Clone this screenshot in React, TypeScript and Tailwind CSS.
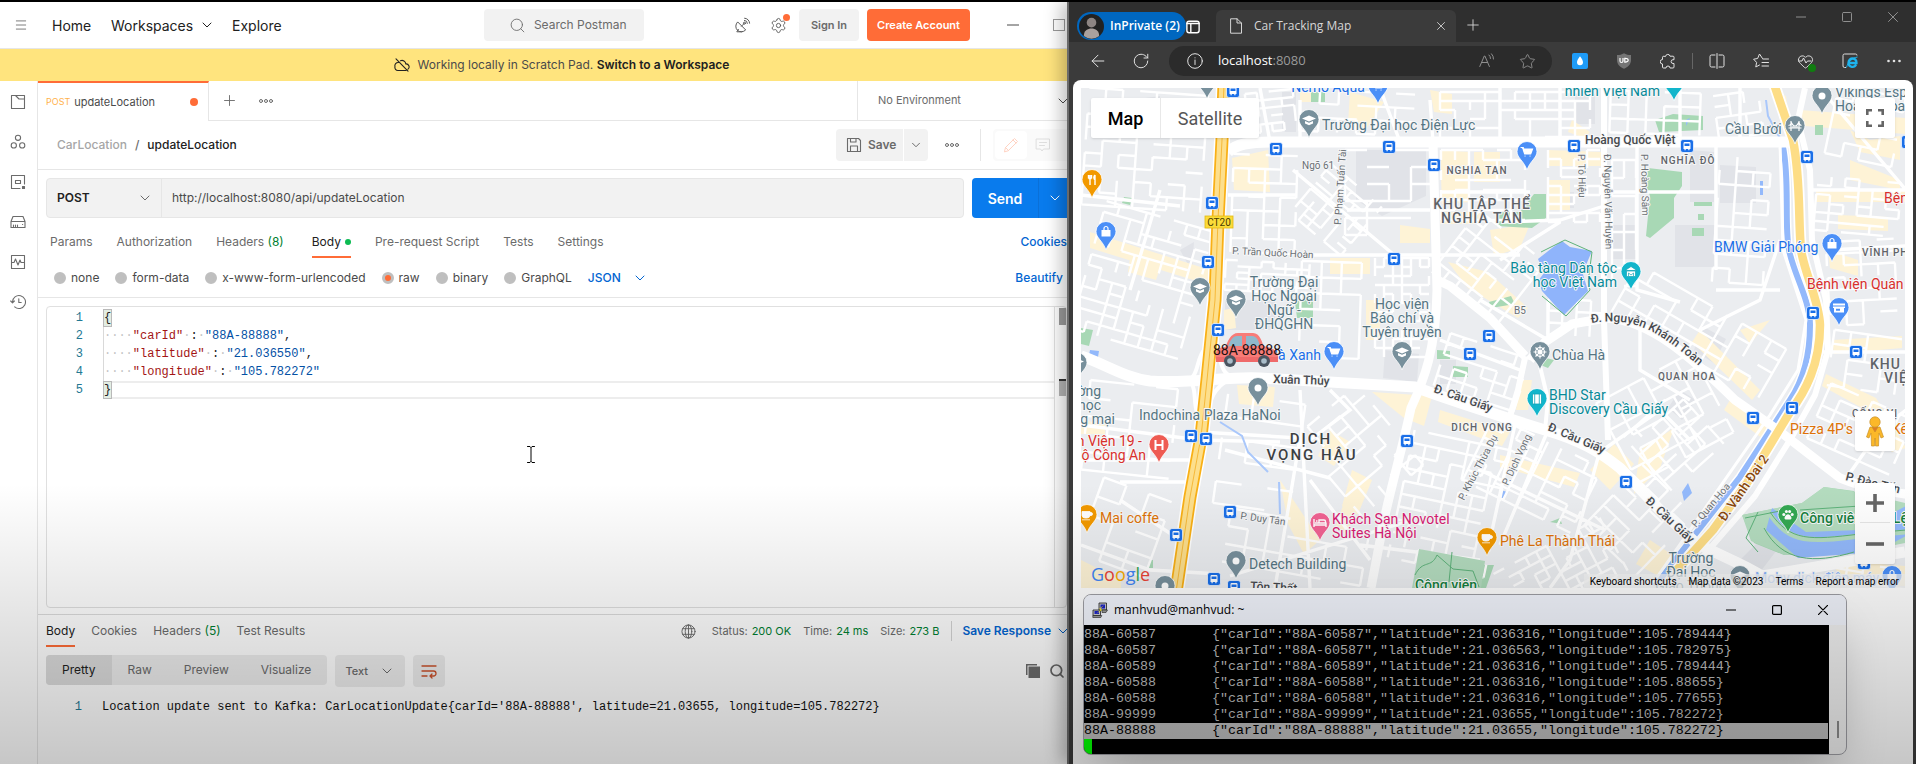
import React from "react";
import { ArrowLeft, ChevronDown, Heart, Menu, Plus, RotateCw, Search, Settings, Star, X } from "lucide-react";

/* ------------------------------------------------------------------ */
/* Small shared pieces                                                 */
/* ------------------------------------------------------------------ */

type SvgProps = { className?: string; children?: React.ReactNode; box?: string; weight?: number };

function Line({ className = "size-4", children, box = "0 0 16 16", weight = 1 }: SvgProps) {
  return (
    <svg
      className={className}
      viewBox={box}
      fill="none"
      stroke="currentColor"
      strokeWidth={weight}
      strokeLinecap="round"
      strokeLinejoin="round"
      aria-hidden="true"
    >
      {children}
    </svg>
  );
}

function Dots({ className = "" }: { className?: string }) {
  return (
    <Line className={`h-1.5 w-4 text-[#6b6b6b] ${className}`} box="0 0 16 6">
      <circle cx="3" cy="3" r="1.5" />
      <circle cx="8" cy="3" r="1.5" />
      <circle cx="13" cy="3" r="1.5" />
    </Line>
  );
}

type PickProps = {
  label: string;
  value: string;
  box: string;
  text: string;
  arrow: string;
};

function Pick({ label, value, box, text, arrow }: PickProps) {
  return (
    <label className={`relative flex items-center ${box}`}>
      <select aria-label={label} className={`w-full appearance-none bg-transparent outline-none ${text}`}>
        <option>{value}</option>
      </select>
      <ChevronDown className={`pointer-events-none absolute size-4 ${arrow}`} strokeWidth={1.5} />
    </label>
  );
}

/* ------------------------------------------------------------------ */
/* API client                                                          */
/* ------------------------------------------------------------------ */

function ClientHeader() {
  return (
    <header className="flex h-[47px] shrink-0 items-center border-b border-[#e6e6e6] pl-3.5 text-[14px] text-[#212121]">
      <button aria-label="Menu" className="text-[#6b6b6b]">
        <Menu className="size-[14px]" strokeWidth={1.5} />
      </button>
      <nav className="flex items-center pl-6">
        <a href="#home" className="w-[59px]">Home</a>
        <button className="flex w-[121px] items-center gap-1.5">
          Workspaces <ChevronDown className="size-4" strokeWidth={1.5} />
        </button>
        <a href="#explore">Explore</a>
      </nav>
      <div className="flex min-w-0 flex-1 justify-end">
        <label className="mr-[90px] flex h-8 w-40 items-center rounded bg-[#f2f2f2] pl-[25px] text-[#6b6b6b]">
          <Search className="size-[17px] shrink-0" strokeWidth={1.25} />
          <input
            aria-label="Search Postman"
            placeholder="Search Postman"
            className="ml-2 w-full min-w-0 bg-transparent text-[12px] outline-none placeholder:text-[#6b6b6b]"
          />
        </label>
      </div>
      <button aria-label="Capture requests" className="mr-[18px] text-[#5a5a5a]">
        <Line className="size-[18px]" box="0 0 18 18">
          <path d="M3.4 6.2a5.6 5.6 0 0 0 8 8zM4.4 13.3l-1.6 2.5h5M7.4 10.3l2.4-2.4" />
          <circle cx="10.4" cy="7.2" r="1" />
          <path d="M10.4 4.4a3 3 0 0 1 3 3M10.6 2.2a5 5 0 0 1 5 5" />
        </Line>
      </button>
      <button aria-label="Settings" className="relative mr-3 text-[#5a5a5a]">
        <Settings className="size-[17px]" strokeWidth={1.3} />
        <span className="absolute -right-[3px] -top-[3px] size-[7px] rounded-full bg-[#ff6c37]" />
      </button>
      <button className="mr-2 h-8 rounded bg-[#f2f2f2] px-3 text-[11px] font-semibold text-[#6b6b6b]">Sign In</button>
      <button className="h-8 rounded bg-[#ff6c37] px-2.5 text-[11px] font-semibold text-white">Create Account</button>
      <button aria-label="Minimize" className="ml-[37px] text-[#4a4a4a]">
        <Line className="size-3" box="0 0 12 12"><path d="M0 6h12" /></Line>
      </button>
      <button aria-label="Maximize" className="ml-[34px] mr-3 size-3 border border-[#9a9a9a]" />
    </header>
  );
}

const railIcons: { name: string; art: React.ReactNode }[] = [
  { name: "Collections", art: <path d="M1.5 1.5h13v13h-13zM5.5 1.5l3.5 3.5h5.5" /> },
  {
    name: "APIs",
    art: (
      <>
        <circle cx="8" cy="3.8" r="2.6" />
        <circle cx="3.8" cy="11.4" r="2.6" />
        <circle cx="12.2" cy="11.4" r="2.6" />
      </>
    ),
  },
  {
    name: "Environments",
    art: (
      <>
        <path d="M14.5 10V1.5h-13v13H10M5.5 6.5h5v3h-5z" />
        <path d="M12.5 12.5h2v2h-2z" fill="currentColor" />
      </>
    ),
  },
  { name: "Mock servers", art: <path d="M1 7.5L3 2.5h10l2 5v6H1zM1 7.5h14M3.5 11v1.5M5.5 11v1.5M7.5 11v1.5M12.5 10.5h.2" /> },
  { name: "Monitors", art: <path d="M1.5 1.5h13v13h-13zM1.5 8.5H4L5.5 5 8 11l2-5 1 2.5h3" /> },
  { name: "History", art: <path d="M2.5 8a6.5 6.5 0 1 1 2.2 4.9M.7 7l1.8 1.8L4.4 7M8.8 4.8v3.7h2.4" /> },
];

function Rail() {
  return (
    <aside className="flex w-[38px] shrink-0 flex-col items-center gap-6 border-r border-[#e6e6e6] pr-px pt-[13px] text-[#6b6b6b]">
      {railIcons.map((icon) => (
        <button key={icon.name} aria-label={icon.name}>
          <Line className="size-4" weight={1.1}>{icon.art}</Line>
        </button>
      ))}
    </aside>
  );
}

function TabBar() {
  return (
    <div className="flex h-10 shrink-0 text-[12px]">
      <div className="flex w-[171px] items-center border-r border-t-2 border-r-[#e6e6e6] border-t-[#ff6c37] pl-2">
        <span className="mr-1 text-[9px] text-[#ffb24d]">POST</span>
        <span className="text-[11px] text-[#4a4a4a]">updateLocation</span>
        <span className="ml-auto mr-2.5 size-2 rounded-full bg-[#ff6c37]" />
      </div>
      <div className="flex flex-1 items-center border-b border-[#e6e6e6] pl-3">
        <button aria-label="New tab" className="text-[#6b6b6b]"><Plus className="size-[17px]" strokeWidth={1.3} /></button>
        <button aria-label="Tab options" className="ml-5"><Dots /></button>
      </div>
      <Pick
        label="Environment"
        value="No Environment"
        box="w-[220px] border-b border-l border-[#e6e6e6] pl-5"
        text="text-[11px] text-[#6b6b6b]"
        arrow="right-1.5 text-[#4a4a4a]"
      />
    </div>
  );
}

function RequestTitle() {
  return (
    <div className="flex h-[49px] shrink-0 items-center border-b border-[#e6e6e6] pl-[19px] text-[12px] font-medium">
      <a href="#collection" className="text-[#a6a6a6]">CarLocation</a>
      <span className="px-2 text-[#6b6b6b]">/</span>
      <h1 className="flex-1 text-[#212121]">updateLocation</h1>
      <button className="flex h-8 w-[67px] items-center gap-1.5 rounded-l bg-[#f2f2f2] pl-2.5 font-semibold text-[#6b6b6b]">
        <Line className="size-4" weight={1.1}>
          <path d="M1.5 1.5h11l2 2v11h-13zM4.5 1.5V5H10V1.5M4.5 14.5V9h7v5.5" />
        </Line>
        Save
      </button>
      <button aria-label="Save options" className="ml-px grid h-8 w-6 place-items-center rounded-r bg-[#f2f2f2] text-[#6b6b6b]">
        <ChevronDown className="size-3.5" strokeWidth={1.7} />
      </button>
      <button aria-label="More actions" className="ml-4"><Dots /></button>
      <div className="ml-5 flex h-8 border-l border-[#e6e6e6] pl-3">
        <div className="flex w-[84px] items-center rounded bg-[#fafafa] p-0.5">
          <button aria-label="Edit" className="grid h-7 w-8 place-items-center rounded bg-white text-[#ffd3c3]">
            <Line className="size-4"><path d="M1.5 14.5l1-4 9-9 3 3-9 9zM10 3l3 3M2.5 10.5l3 3" /></Line>
          </button>
          <button aria-label="Comments" className="grid h-7 w-8 place-items-center text-[#dedede]">
            <Line className="size-4"><path d="M1.5 2h13v10h-6L7 14l-1.5-2h-4zM4.500 5.500h7M4.500 8.500h5" /></Line>
          </button>
        </div>
      </div>
    </div>
  );
}

function UrlRow() {
  return (
    <div className="flex shrink-0 gap-2 pl-2 pt-2 text-[12px]">
      <div className="flex h-10 min-w-0 flex-1 rounded border border-[#e6e6e6] bg-[#f2f2f2]">
        <Pick
          label="Method"
          value="POST"
          box="w-[115px] border-r border-[#e6e6e6] pl-2.5"
          text="font-semibold text-[#212121]"
          arrow="right-2 text-[#6b6b6b]"
        />
        <input
          aria-label="Request URL"
          defaultValue="http://localhost:8080/api/updateLocation"
          className="min-w-0 flex-1 bg-transparent pl-2.5 text-[#4a4a4a] outline-none"
        />
      </div>
      <div className="flex h-10 w-[105px] overflow-hidden rounded-l bg-[#097bed] text-white">
        <button className="w-[67px] border-r border-[#0a70d8] text-[14px] font-semibold">Send</button>
        <button aria-label="Send options" className="pl-2"><ChevronDown className="size-4" strokeWidth={1.5} /></button>
      </div>
    </div>
  );
}

function RequestTabs() {
  return (
    <nav className="mt-2 flex h-8 shrink-0 items-stretch gap-6 pl-3 text-[12px] text-[#6b6b6b]">
      <button>Params</button>
      <button>Authorization</button>
      <button className="pr-1">Headers <span className="text-[#007f31]">(8)</span></button>
      <button className="flex items-center gap-1 border-b-2 border-[#ff6c37] pt-0.5 text-[#212121]">
        Body <span className="size-1.5 rounded-full bg-[#0cbb52]" />
      </button>
      <button>Pre-request Script</button>
      <button>Tests</button>
      <button>Settings</button>
      <button className="ml-auto mr-2.5 font-medium text-[#0265d2]">Cookies</button>
    </nav>
  );
}

const bodyKinds = ["none", "form-data", "x-www-form-urlencoded", "raw", "binary", "GraphQL"];

function BodyKinds() {
  return (
    <div className="flex h-10 shrink-0 items-center gap-4 border-b border-[#e6e6e6] pl-4 text-[12px] text-[#4a4a4a]">
      {bodyKinds.map((kind) => (
        <label key={kind} className="flex items-center gap-[5px]">
          <input
            type="radio"
            name="body-kind"
            defaultChecked={kind === "raw"}
            className="size-3 appearance-none rounded-full border-[3px] border-[#bfbfbf] bg-[#bfbfbf] checked:bg-[#ff6c37]"
          />
          {kind}
        </label>
      ))}
      <Pick
        label="Raw format"
        value="JSON"
        box="w-[60px]"
        text="font-medium text-[#0265d2]"
        arrow="right-0 text-[#0265d2]"
      />
      <button className="ml-auto mr-3.5 font-medium text-[#0265d2]">Beautify</button>
    </div>
  );
}

const payload: { key: string; value: string; end: string }[] = [
  { key: '"carId"', value: '"88A-88888"', end: "," },
  { key: '"latitude"', value: '"21.036550"', end: "," },
  { key: '"longitude"', value: '"105.782272"', end: "" },
];

function Brace({ children }: { children: string }) {
  return <span className="h-[18px] border border-[#b9b9b9] bg-[#e3ede3] leading-4">{children}</span>;
}

function Editor() {
  return (
    <div className="relative mb-1.5 ml-2 mr-2.5 mt-2 flex min-h-0 flex-1 rounded-sm border border-[#e0e0e0] font-['Liberation_Mono',monospace] text-[12px] leading-[18px]">
      <ol className="w-9 pt-0.5 text-right text-[#237893]">
        {[1, 2, 3, 4, 5].map((n) => <li key={n}>{n}</li>)}
      </ol>
      <div className="ml-5 flex-1 whitespace-pre pt-0.5 text-[#212121]">
        <div className="flex h-[18px]"><Brace>{"{"}</Brace></div>
        {payload.map((row) => (
          <div key={row.key} className="border-l border-[#d9d9d9]">
            <span className="text-[#c4c4c4]">····</span>
            <span className="text-[#a31515]">{row.key}</span>
            <span className="text-[#c4c4c4]">·</span>:<span className="text-[#c4c4c4]">·</span>
            <span className="text-[#0451a5]">{row.value}</span>
            {row.end}
          </div>
        ))}
        <div className="flex h-[18px] border-y-2 border-[#ededed]">
          <span className="-mt-0.5 flex"><Brace>{"}"}</Brace></span>
        </div>
      </div>
      <div className="w-3 border-l border-[#e0e0e0] pl-1 pt-px">
        <div className="h-[17px] bg-[#9b9b9b]" />
        <div className="mt-[54px] h-[17px] border-t-2 border-[#333333] bg-[#b5b5b5]" />
      </div>
      <Line className="absolute left-[480px] top-[139px] h-[17px] w-2 text-black" box="0 0 8 17">
        <path d="M.5.5H3l1 1 1-1h2.500M4 1.500v14M.5 16.500H3l1-1 1 1h2.500" />
      </Line>
    </div>
  );
}

const stats = [
  { name: "Status:", value: "200 OK" },
  { name: "Time:", value: "24 ms" },
  { name: "Size:", value: "273 B" },
];

function Response() {
  return (
    <section className="h-[150px] shrink-0 border-t border-[#dcdcdc] pl-2 text-[12px]">
      <div className="flex h-8 items-stretch">
        <nav className="flex gap-4 text-[#6b6b6b]">
          <button className="border-b-2 border-[#ff6c37] pt-0.5 text-[#212121]">Body</button>
          <button>Cookies</button>
          <button>Headers <span className="text-[#007f31]">(5)</span></button>
          <button>Test Results</button>
        </nav>
        <dl className="ml-auto flex items-center gap-3 text-[11px] text-[#6b6b6b]">
          <Line className="mr-1 size-[15px]">
            <circle cx="8" cy="8" r="7" />
            <ellipse cx="8" cy="8" rx="3.5" ry="7" />
            <path d="M1.800 5h12.400M1.800 11h12.400M8 1v14" />
          </Line>
          {stats.map((s) => (
            <div key={s.name} className="flex gap-1">
              <dt>{s.name}</dt>
              <dd className="text-[#007f31]">{s.value}</dd>
            </div>
          ))}
        </dl>
        <button className="my-1.5 ml-3 mr-1.5 flex items-center gap-1 border-l border-[#d4d4d4] pl-2.5 font-semibold text-[#0265d2]">
          Save Response <ChevronDown className="size-4" strokeWidth={1.5} />
        </button>
      </div>
      <div className="mt-2 flex items-start gap-2">
        <div className="flex h-[30px] overflow-hidden rounded bg-[#ededed] text-[#6b6b6b]">
          <button className="bg-[#dcdcdc] px-4 text-[#212121]">Pretty</button>
          <button className="px-4">Raw</button>
          <button className="px-4">Preview</button>
          <button className="px-4">Visualize</button>
        </div>
        <Pick
          label="Response format"
          value="Text"
          box="h-8 w-[70px] rounded bg-[#ededed] pl-2.5"
          text="text-[11px] font-medium text-[#6b6b6b]"
          arrow="right-2.5 text-[#6b6b6b]"
        />
        <button aria-label="Wrap lines" className="grid h-8 w-8 place-items-center rounded bg-[#ededed] text-[#c9502a]">
          <Line className="size-4" weight={1.3}>
            <path d="M1 3h14M1 8h11.500a2.500 2.500 0 0 1 0 5H9.500M11 11l-2 2 2 2M1 13h5" />
          </Line>
        </button>
        <div className="ml-auto mr-3 flex gap-2 pt-2 text-[#6b6b6b]">
          <button aria-label="Copy">
            <svg viewBox="0 0 16 16" className="size-4" fill="currentColor" aria-hidden="true">
              <path d="M1 1h11v1.500H2.500V12H1z" /><path d="M3.500 3.500H15V15H3.500z" />
            </svg>
          </button>
          <button aria-label="Search response"><Search className="size-4" strokeWidth={2.6} /></button>
        </div>
      </div>
      <div className="mt-[11px] flex font-['Liberation_Mono',monospace] leading-[18px]">
        <span className="w-9 text-right text-[#237893]">1</span>
        <output className="ml-5 whitespace-pre text-[#111111]">
          {"Location update sent to Kafka: CarLocationUpdate{carId='88A-88888', latitude=21.03655, longitude=105.782272}"}
        </output>
      </div>
    </section>
  );
}

function Client() {
  return (
    <div className="min-w-0 overflow-hidden bg-white font-['Inter',sans-serif]">
      <div className="flex h-full w-[calc(100%+10px)] flex-col">
        <ClientHeader />
        <div className="flex h-8 shrink-0 items-center justify-center gap-2 bg-[#ffe47e] pl-[46px] text-[12px] text-[#4a4a4a]">
          <Line className="h-3.5 w-4 text-[#212121]" box="0 0 16 14" weight={1.1}>
            <path d="M4.500 4.500A3.300 3.300 0 0 0 1 8.700a3 3 0 0 0 3 3.800h8M6.500 2.700a3.800 3.800 0 0 1 5.300 3.200 3 3 0 0 1 2.200 5.300M2 .8l12 12.400" />
          </Line>
          <span>Working locally in Scratch Pad. <a href="#switch" className="font-semibold text-[#212121]">Switch to a Workspace</a></span>
        </div>
        <div className="flex min-h-0 flex-1">
          <Rail />
          <main className="flex min-w-0 flex-1 flex-col">
            <TabBar />
            <RequestTitle />
            <UrlRow />
            <RequestTabs />
            <BodyKinds />
            <Editor />
            <Response />
          </main>
        </div>
      </div>
    </div>
  );
}

/* ------------------------------------------------------------------ */
/* Street map                                                          */
/* ------------------------------------------------------------------ */

type Patch = [x: number, y: number, w: number, h: number, turn: number, dx: number, dy: number];

const patches: Patch[] = [
  [1085, 92, 130, 120, 4, 17, 13],
  [1085, 215, 120, 140, 16, 14, 11],
  [1235, 92, 60, 44, -6, 12, 8],
  [1300, 92, 130, 44, 3, 19, 14],
  [1232, 155, 64, 100, 2, 16, 14],
  [1300, 180, 75, 70, 40, 11, 8],
  [1345, 150, 88, 100, 0, 22, 17],
  [1375, 258, 60, 100, 0, 9, 9],
  [1225, 262, 85, 30, 3, 12, 6],
  [1300, 262, 70, 110, 2, 20, 16],
  [1440, 92, 160, 46, 0, 15, 9],
  [1441, 150, 95, 76, 0, 14, 10],
  [1445, 230, 90, 80, 38, 14, 11],
  [1548, 150, 54, 76, 0, 13, 9],
  [1548, 300, 56, 46, 3, 14, 12],
  [1610, 92, 96, 46, 2, 18, 14],
  [1612, 160, 30, 140, 0, 12, 18],
  [1716, 92, 56, 46, -8, 15, 11],
  [1716, 158, 66, 130, 4, 17, 14],
  [1830, 92, 80, 80, 12, 17, 14],
  [1815, 180, 95, 60, 5, 14, 9],
  [1828, 240, 80, 90, -3, 17, 12],
  [1612, 305, 180, 60, 30, 17, 14],
  [1610, 370, 120, 90, -28, 18, 15],
  [1830, 335, 80, 60, 8, 17, 14],
  [1815, 400, 95, 60, 24, 15, 12],
  [1085, 385, 100, 100, 6, 22, 18],
  [1085, 490, 90, 95, 20, 24, 20],
  [1220, 400, 95, 110, 8, 26, 22],
  [1225, 520, 140, 62, 10, 20, 18],
  [1320, 395, 90, 110, -40, 16, 13],
  [1400, 440, 110, 130, 12, 14, 13],
  [1440, 345, 85, 55, 18, 14, 11],
  [1470, 440, 130, 80, 26, 15, 12],
  [1500, 540, 130, 60, -28, 12, 10],
  [1600, 480, 80, 90, 44, 18, 14],
  [1640, 400, 80, 80, -42, 14, 12],
  [1830, 565, 80, 24, 10, 16, 9],
];

/* Broken grid lines give each quarter its own irregular block layout. */
function streetPath([, , w, h, , dx, dy]: Patch, index: number): string {
  let seed = index * 7919 + 17;
  const next = () => {
    seed = (seed * 16807) % 2147483647;
    return seed / 2147483647;
  };
  const parts: string[] = [];
  for (let x = 0; x <= w; x += dx) {
    for (let y = 0; y + dy <= h; y += dy) {
      if (next() > 0.4) parts.push(`M${x} ${y}v${dy}`);
    }
  }
  for (let y = 0; y <= h; y += dy) {
    for (let x = 0; x + dx <= w; x += dx) {
      if (next() > 0.35) parts.push(`M${x} ${y}h${dx}`);
    }
  }
  return parts.join("");
}

const cream =
  "M1232 158l36-8 2 42-36-2zM1224 310l10-2 2 20-12 2zM1237 385l38 2-2 20-34-3zM1090 232l120 38-4 14-116-36zM1081 420l24 4v10h-24zM1130 258l30 10-4 12-28-8z" +
  "M1300 92l20 0 0 10-20 0zM1350 92l34 10-20 30-16-8zM1430 90l22 4 0 20-18-2zM1440 150l30 2v50l-28 2zM1474 152l26 0v30h-26zM1548 150l54 2v14h-54zM1548 180l22 0v30h-22zM1572 120l18 12-6 6-16-6z" +
  "M1330 258l40 0v16h-40zM1366 300l14 0v40h-14zM1448 262l40 10 40 36-10 10-50-30zM1400 225l30 4v14h-30zM1440 212l40 0v12h-40zM1490 230l40-6-10 24-26 8z" +
  "M1372 392l60 4-8 30-20-8zM1330 430l20 12-16 24-16-10zM1280 480l20 30 20 30-16 14-16-30zM1352 470l20 10-14 34-16-8zM1345 500l16 4-16 30-10-6zM1440 410l70 22-8 14-64-24z" +
  "M1520 380l12 0-4 30-12 0zM1590 470l24-26 20 20-24 26zM1640 450l34-22-14 40-26 26zM1500 455l80 18-6 14-74-20zM1700 330l60 60-8 10-60-58zM1740 330l30-10-20 24zM1730 400l40 30-8 8-38-28z" +
  "M1776 92l10 4 4 30-6-2zM1800 110l105 8v16l-100-8zM1850 130l20 10 30-4v24l-40-8zM1816 190l90 0v12h-90zM1838 215l50 2v14l-50-2zM1850 160l50 20v10l-50-10zM1828 250l30 10v16l-28-8z" +
  "M1832 340l70-4v12l-68 6zM1826 374l50 24 30 50-14 4-30-44-40-22zM1830 560l75 6v20l-60-2zM1650 540l30 20-14 20-30-16zM1081 560l40 20v8h-40z";

const campus =
  "M1356 150l70 0v46l-44 20-26-16zM1282 92l14 0v40h-14zM1550 192l24 0v16h-24zM1611 225l26 0v34h-26zM1675 225l40 0v42h-40zM1690 150l24 2v50h-24zM1720 165l36 2v36h-36z" +
  "M1130 100l30-4v22h-30zM1180 250l14-8-2 30zM1225 300l50 0v30h-50zM1385 350l34 4-2 28-34-4zM1700 325l26 14-12 24-20-12zM1680 390l16 10-14 20-14-12zM1730 570l34-34 16 10-26 34zM1440 360l16 0v24h-16zM1575 94l20 0v30h-20z";

const parks =
  "M1311 92h14v10h-14zM1124 197l8 1-2 7-8-2zM1081 328l12 2-4 16-8-2zM1295 302l18-6v22h-16zM1437 350l13 1v8h-13zM1453 366l15 1v10h-15zM1534 194h12v24l-14 10-36-2 4-14h20z" +
  "M1648 168l34 4v14l-8 12v20l-24 20-4-2 4-40-4-10zM1655 120l18-6 30 2v14l-44 2zM1692 228h12v8h-12zM1698 214h6v6h-6zM1694 202h18v4h-18zM1815 125h8v10h-8zM1489 302l22-6 4 8-24 4zM1538 356l16 4-6 8-10-4z" +
  "M1149 560h4v8h-4zM1480 565l14 0-8 23h-6zM1742 515l60-12 22-16 30 4v20l-10 30-60 14-30-12zM1550 522l10-4 2 6z";

const water =
  "M1682 492l6-9 4 10-8 8zM1501 490l6 2-4 7-4-3zM1090 350l9 1-1 6-9-2zM1760 181h3v14h-3zM1686 120l4-2-4 8z";

const arterials: [string, number][] = [
  ["M1081 356C1105 364 1125 378 1150 381C1190 384 1230 376 1260 378L1415 387C1450 400 1500 416 1545 430C1580 440 1600 452 1620 468L1660 510L1695 542C1720 556 1740 562 1762 576L1905 552", 11],
  ["M1228 152C1236 144 1250 142 1270 142L1790 142", 11],
  ["M1433 142L1437 290C1436 350 1424 380 1411 408C1402 450 1390 490 1383 525L1371 588", 9],
  ["M1437 280L1450 286L1490 318L1525 356", 9],
  ["M1530 360L1545 342L1572 324L1606 318C1650 320 1690 356 1735 400L1778 430L1840 478C1870 490 1890 492 1906 494", 9],
  ["M1604 88L1604 320L1608 440", 6],
  ["M1805 88L1798 120L1810 170L1812 240L1826 300L1828 350L1815 395L1790 440L1755 496L1700 560", 6],
  ["M1780 142L1783 250L1806 320L1798 370L1770 415L1690 530L1655 580", 3],
  ["M1525 358L1518 390L1510 416", 6],
  ["M1539 362L1548 400L1545 430", 4],
];

const lanes =
  "M1293 170L1393 254M1347 210H1430M1310 255H1520M1228 195H1296M1081 195L1180 206M1160 190L1130 290M1081 425L1200 440L1280 442M1081 460H1190M1200 432L1300 438L1275 588M1225 450L1330 478M1120 482H1190M1120 500L1180 540" +
  "M1081 545L1150 570L1220 574M1230 576L1412 520M1300 390L1310 588M1360 545L1480 560M1310 440L1350 410L1330 390M1310 480L1370 560M1440 340L1520 370M1516 420L1490 540M1480 470L1605 530M1548 430L1500 545M1600 452L1660 410L1690 440" +
  "M1502 222L1560 220L1604 206M1560 222L1500 260M1610 192H1716M1637 142V290L1680 302M1716 142V270M1700 330L1760 300L1780 240M1716 290H1780M1640 318V370L1690 400M1820 352H1906M1830 250L1906 246M1810 190H1906M1830 100L1906 190" +
  "M1845 480L1880 430L1906 410M1548 300V340M1480 300L1548 340M1441 192H1530M1500 88V142M1560 88V142M1680 88V142M1740 88V142M1380 88L1400 142M1430 100L1433 142M1300 100V142M1260 88L1270 142M1600 450L1570 560L1550 588";

const ring = "M1774 84L1793 140C1801 180 1798 220 1801 250C1805 275 1819 300 1820 325C1820 365 1805 392 1790 412L1747 483L1713 530L1675 572";
const river = "M1783 147C1790 180 1784 225 1789 250C1794 275 1810 300 1810 325C1810 360 1800 385 1790 400L1740 477L1693 537L1655 586";
const highway = "M1224 84L1222 140L1218 220L1215 300L1207 380L1201 437L1190 497L1176 592";

const stops: [number, number][] = [
  [1233, 91], [1276, 149], [1389, 147], [1434, 165], [1212, 203], [1208, 262], [1394, 259], [1574, 146], [1687, 146],
  [1807, 157], [1908, 142], [1218, 330], [1470, 354], [1489, 336], [1191, 436], [1206, 439], [1407, 441], [1230, 512],
  [1176, 535], [1214, 579], [1234, 587], [1813, 313], [1856, 352], [1792, 408], [1753, 418], [1626, 482], [1864, 563],
];

const glyphs: Record<string, React.ReactNode> = {
  dot: <circle r="3.5" fill="#fff" />,
  school: <path d="M0-4.500l7 3-7 3-7-3zM-4 1l4 1.700L4 1v2.500L0 5.200-4 3.500z" fill="#fff" />,
  cart: <path d="M-6-4.500h2.200l.6 1.500H5.500L3.700 2h-6l-1.500-4.500M-2 4h.1M3 4h.1" fill="#fff" stroke="#fff" strokeWidth="1.2" strokeLinecap="round" />,
  bag: (
    <>
      <path d="M-4.500-2h9v6.500h-9z" fill="#fff" />
      <path d="M-2-2v-1.500a2 2 0 0 1 4 0V-2" fill="none" stroke="#fff" strokeWidth="1.2" />
    </>
  ),
  food: <path d="M-3.500-5v3.500M-2-5v10M-.5-5v3.500M-3.500-1.500h3M3-5v10M3-5c-1.500 1-1.500 4 0 5" fill="none" stroke="#fff" strokeWidth="1.4" />,
  cup: <path d="M-5-3.500H3v4A3 3 0 0 1 0 3h-2a3 3 0 0 1-3-2.500zM3-2.500h1a1.500 1.500 0 0 1 0 3H3M-5 4.800h8" fill="#fff" stroke="#fff" strokeWidth=".8" />,
  wheel: (
    <g fill="none" stroke="#fff" strokeWidth="1.1">
      <circle r="4.5" /><circle r="1.5" />
      <path d="M0-6.500v13M-6.500 0h13M-4.500-4.500l9 9M4.500-4.500l-9 9" />
    </g>
  ),
  film: <path d="M-4.500-5h9v10h-9zM-2.300-5v10M2.300-5v10" fill="#fff" stroke="#12a5b8" strokeWidth=".8" />,
  museum: <path d="M-6-1.500L0-5.500l6 4zM-4.500-1h9v5.500h-9zM-2.500 4V1L0 3l2.500-2v3" fill="#fff" stroke="#12a5b8" strokeWidth=".7" />,
  bridge: <path d="M-4-5v10M4-5v10M-6.500 2h13M-6.500-.5C-3-1-4-4-4-4S-2 0 0 0s4-4 4-4 0 3 2.500 3.500M-2 0v2M0 0v2M2 0v2" fill="none" stroke="#fff" strokeWidth="1.2" />,
  shop: <path d="M-6-4.500h12v2h-12zM-6-1.500h12V0h-1v4.500H-5V0h-1zM-3 .8v2h4v-2z" fill="#fff" fillRule="evenodd" />,
  hospital: <path d="M-3.500-5v10M3.500-5v10M-3.500 0h7" fill="none" stroke="#fff" strokeWidth="2" />,
  bed: <path d="M-6-4v8M-6 2H6M6 4V-.5M-5 0h10M-1-3h5a1.500 1.500 0 0 1 1.500 1.500V0H-1zM-4-2h1.500" fill="none" stroke="#fff" strokeWidth="1.4" />,
  paw: (
    <g fill="#fff">
      <circle cx="-4.2" cy="-.5" r="1.5" /><circle cx="-1.6" cy="-3.5" r="1.5" />
      <circle cx="1.6" cy="-3.5" r="1.5" /><circle cx="4.2" cy="-.5" r="1.5" />
      <path d="M0-.8c2 0 3.500 2.500 3.500 3.800 0 2-2 1.500-3.500 1.500S-3.500 5-3.500 3C-3.500 1.700-2-.8 0-.8z" />
    </g>
  ),
};

const slate = "#78909c";
const blue = "#4b8ff7";
const pins: [number, number, string, string][] = [
  [1207, 81, slate, "dot"], [1378, 86, blue, "cart"], [1309, 120, slate, "school"], [1092, 180, "#f29900", "food"],
  [1106, 232, blue, "bag"], [1200, 288, slate, "school"], [1236, 300, slate, "school"], [1258, 388, slate, "dot"],
  [1334, 352, blue, "cart"], [1402, 352, slate, "school"], [1540, 352, slate, "wheel"], [1537, 399, "#12b5cb", "film"],
  [1631, 272, "#12b5cb", "museum"], [1527, 152, blue, "cart"], [1674, 83, "#12b5cb", "dot"], [1822, 96, slate, "dot"],
  [1795, 126, slate, "bridge"], [1832, 244, blue, "bag"], [1839, 308, blue, "shop"], [1159, 445, "#ee5b52", "hospital"],
  [1087, 515, "#f29900", "cup"], [1320, 523, "#f06292", "bed"], [1236, 561, slate, "dot"], [1165, 586, slate, "dot"],
  [1487, 538, "#f29900", "cup"], [1788, 515, "#34a853", "paw"], [1740, 576, slate, "school"], [1892, 576, blue, "bag"],
  [1077, 363, slate, "school"],
];

type Label = {
  x: number;
  y: number;
  lines: string[];
  tone: keyof typeof tones;
  anchor?: "start" | "middle" | "end";
  turn?: number;
};

const tones = {
  place: "fill-[#557583] text-[14px]",
  shop: "fill-[#1a6fe8] text-[14px]",
  teal: "fill-[#078a98] text-[14px]",
  food: "fill-[#dd7208] text-[14px]",
  hotel: "fill-[#d81b72] text-[14px]",
  health: "fill-[#d9302c] text-[14px]",
  park: "fill-[#15803d] text-[14px] font-medium",
  lane: "fill-[#6b7075] text-[10px]",
  road: "fill-[#46494d] text-[12px] font-medium",
  ring: "fill-[#8a4708] text-[13px] font-medium",
  ward: "fill-[#5f6368] text-[10px] font-medium tracking-[1px]",
  area: "fill-[#5f6368] text-[14px] font-medium tracking-[1px]",
  district: "fill-[#3c4043] text-[15px] font-medium tracking-[2px]",
};

const labels: Label[] = [
  { x: 1328, y: 92, lines: ["Nemo Aqua"], tone: "shop", anchor: "middle" },
  { x: 1322, y: 130, lines: ["Trường Đại học Điện Lực"], tone: "place" },
  { x: 1302, y: 169, lines: ["Ngõ 61"], tone: "lane" },
  { x: 1341, y: 225, lines: ["P. Phạm Tuấn Tài"], tone: "lane", turn: -86 },
  { x: 1477, y: 174, lines: ["NGHIA TAN"], tone: "ward", anchor: "middle" },
  { x: 1482, y: 209, lines: ["KHU TẬP THỂ", "NGHĨA TÂN"], tone: "area", anchor: "middle" },
  { x: 1232, y: 254, lines: ["P. Trần Quốc Hoàn"], tone: "lane", turn: 3 },
  { x: 1284, y: 287, lines: ["Trường Đại", "Học Ngoại", "Ngữ -", "ĐHQGHN"], tone: "place", anchor: "middle" },
  { x: 1321, y: 360, lines: ["Ga Hà Xanh"], tone: "shop", anchor: "end" },
  { x: 1402, y: 309, lines: ["Học viện", "Báo chí và", "Tuyên truyền"], tone: "place", anchor: "middle" },
  { x: 1273, y: 383, lines: ["Xuân Thủy"], tone: "road", turn: 2 },
  { x: 1139, y: 420, lines: ["Indochina Plaza HaNoi"], tone: "place" },
  { x: 1101, y: 396, lines: ["Trường", "Đại học"], tone: "place", anchor: "end" },
  { x: 1115, y: 424, lines: ["Thương mại"], tone: "place", anchor: "end" },
  { x: 1142, y: 446, lines: ["Bệnh Viện 19 -"], tone: "health", anchor: "end" },
  { x: 1146, y: 460, lines: ["Bộ Công An"], tone: "health", anchor: "end" },
  { x: 1311, y: 444, lines: ["DỊCH"], tone: "district", anchor: "middle" },
  { x: 1312, y: 460, lines: ["VỌNG HẬU"], tone: "district", anchor: "middle" },
  { x: 1433, y: 392, lines: ["Đ. Cầu Giấy"], tone: "road", turn: 19 },
  { x: 1482, y: 431, lines: ["DICH VONG"], tone: "ward", anchor: "middle" },
  { x: 1464, y: 501, lines: ["P. Khúc Thừa Dụ"], tone: "lane", turn: -62 },
  { x: 1508, y: 486, lines: ["P. Dịch Vọng"], tone: "lane", turn: -65 },
  { x: 1100, y: 523, lines: ["Mai coffe"], tone: "food" },
  { x: 1240, y: 519, lines: ["P. Duy Tân"], tone: "lane", turn: 8 },
  { x: 1332, y: 524, lines: ["Khách Sạn Novotel", "Suites Hà Nội"], tone: "hotel" },
  { x: 1249, y: 569, lines: ["Detech Building"], tone: "place" },
  { x: 1250, y: 590, lines: ["Tôn Thất"], tone: "road", turn: 3 },
  { x: 1446, y: 590, lines: ["Công viên"], tone: "park", anchor: "middle" },
  { x: 1500, y: 546, lines: ["Phê La Thành Thái"], tone: "food" },
  { x: 1660, y: 96, lines: ["nhiên Việt Nam"], tone: "teal", anchor: "end" },
  { x: 1725, y: 134, lines: ["Cầu Bưởi"], tone: "place" },
  { x: 1585, y: 144, lines: ["Hoàng Quốc Việt"], tone: "road" },
  { x: 1688, y: 164, lines: ["NGHĨA ĐÔ"], tone: "ward", anchor: "middle" },
  { x: 1578, y: 154, lines: ["P. Tô Hiệu"], tone: "lane", turn: 89 },
  { x: 1604, y: 154, lines: ["Đ. Nguyễn Văn Huyên"], tone: "lane", turn: 89 },
  { x: 1641, y: 154, lines: ["P. Hoàng Sâm"], tone: "lane", turn: 89 },
  { x: 1835, y: 97, lines: ["Vikings Esports", "Hoàng Hoa Thám"], tone: "place" },
  { x: 1714, y: 252, lines: ["BMW Giải Phóng"], tone: "shop" },
  { x: 1862, y: 256, lines: ["VĨNH PHÚC"], tone: "ward" },
  { x: 1884, y: 203, lines: ["Bệnh viện"], tone: "health" },
  { x: 1807, y: 289, lines: ["Bệnh viện Quân"], tone: "health" },
  { x: 1617, y: 273, lines: ["Bảo tàng Dân tộc", "học Việt Nam"], tone: "teal", anchor: "end" },
  { x: 1514, y: 314, lines: ["B5"], tone: "lane" },
  { x: 1552, y: 360, lines: ["Chùa Hà"], tone: "place" },
  { x: 1549, y: 400, lines: ["BHD Star", "Discovery Cầu Giấy"], tone: "teal" },
  { x: 1687, y: 380, lines: ["QUAN HOA"], tone: "ward", anchor: "middle" },
  { x: 1547, y: 430, lines: ["Đ. Cầu Giấy"], tone: "road", turn: 23 },
  { x: 1645, y: 502, lines: ["Đ. Cầu Giấy"], tone: "road", turn: 43 },
  { x: 1696, y: 528, lines: ["P. Quan Hoa"], tone: "lane", turn: -50 },
  { x: 1725, y: 522, lines: ["Đ. Vành Đai 2"], tone: "ring", turn: -55 },
  { x: 1790, y: 434, lines: ["Pizza 4P's Phan Kế"], tone: "food" },
  { x: 1870, y: 369, lines: ["KHU"], tone: "area" },
  { x: 1884, y: 383, lines: ["VIỆN"], tone: "area" },
  { x: 1852, y: 417, lines: ["CỐNG VỊ"], tone: "ward" },
  { x: 1845, y: 480, lines: ["P. Đào Tấn"], tone: "road", turn: 14 },
  { x: 1800, y: 523, lines: ["Công viên Thủ Lệ"], tone: "park" },
  { x: 1691, y: 563, lines: ["Trường", "Đại Học", "Giao Thông"], tone: "place", anchor: "middle" },
];

function MapPin({ at }: { at: [number, number, string, string] }) {
  const [x, y, color, glyph] = at;
  return (
    <g transform={`translate(${x} ${y})`}>
      <path d="M0-10.500A10 10 0 0 1 10-.500C10 6 3 9 0 18C-3 9-10 6-10-.500A10 10 0 0 1 0-10.500z" fill={color} stroke="#fff" strokeWidth=".8" />
      {glyphs[glyph]}
    </g>
  );
}

function BusStop({ at }: { at: [number, number] }) {
  return (
    <g transform={`translate(${at[0]} ${at[1]})`}>
      <rect x="-6.5" y="-6.5" width="13" height="13" rx="2.5" fill="#1a6fe8" stroke="#fff" strokeWidth=".7" />
      <path d="M-3.500-2.800Q-3.500-4-2.300-4H2.300Q3.500-4 3.500-2.800V3H2.500v1.200h-1.200V3h-2.600v1.200h-1.200V3h-1zM-2.500-2.600V0h5v-2.600z" fill="#fff" fillRule="evenodd" />
    </g>
  );
}

function CarMarker() {
  return (
    <g>
      <path d="M1225 350c2-9 6-17 13-17h15c7 0 9 9 12 17z" fill="#f77c78" />
      <path d="M1228 347c2-7 5-11 9-11h5v11zM1246 336h6c5 0 7 5 8 11h-14z" fill="#8fb9cc" />
      <path d="M1217 350c3-3 10-4 18-4h28c9 1 14 5 15 10v6h-61c-2-3-2-8 0-12z" fill="#f77c78" />
      <path d="M1216 357h62v5h-62z" fill="#ef6a6a" />
      {[1230, 1264].map((x) => (
        <g key={x}>
          <circle cx={x} cy="361" r="6" fill="#4a5560" />
          <circle cx={x} cy="361" r="2.8" fill="#a9bcc8" />
        </g>
      ))}
      <text x="1247" y="355" textAnchor="middle" className="fill-[#1c1010] text-[14px]">88A-88888</text>
    </g>
  );
}

function StreetMap() {
  return (
    <svg
      viewBox="1081 88 824 500"
      preserveAspectRatio="xMidYMid slice"
      className="size-full font-['Roboto',sans-serif]"
      role="img"
      aria-label="Street map"
    >
      <rect x="1081" y="88" width="824" height="500" fill="#ebedf0" />
      <path d={campus} fill="#e1e3e8" />
      <path d={cream} fill="#fef3d6" />
      <path d={parks} fill="#a8d8b5" />
      <path d={water} fill="#93b9fb" />
      <g fill="none" stroke="#fff" strokeWidth="2.4">
        {patches.map((p, i) => (
          <path key={i} d={streetPath(p, i)} transform={`translate(${p[0]} ${p[1]}) rotate(${p[4]} ${p[2] / 2} ${p[3] / 2})`} />
        ))}
        <path d={lanes} strokeWidth="3.4" />
      </g>
      <path d="M1552 248l10-7 8 6 22 4-6 14-4 6 6 20-24 24-22-24-4-10 6-8-6-14z" fill="#8fb4fb" />
      <path d="M1742 515l60-12 22-16 40 6 41 10v40l-60 12-60 0-34-14z" fill="#b4dcbf" />
      <path d="M1772 508l34 24 54-2 46-24v30l-30 16-78 6-32-28z" fill="#93b9fb" />
      <path d="M1770 514c20 30 40 28 90 22l46-4" fill="none" stroke="#b4dcbf" strokeWidth="5" />
      <path d="M1770 512c20 30 40 28 90 22l46-4M1745 518l40-8M1758 512l-12 26 12 14M1800 510l60-4M1764 528c18 34 50 36 90 24" fill="none" stroke="#5eb27a" strokeWidth="1" />
      <path d="M1419 549l66 12-4 27h-69z" fill="#b4dcbf" />
      <path d="M1415 575c8-16 16-6 22-20l16 14 20 2 6 16M1452 552l-3 30M1541 252l24-12 27 12-4 30 2 8-24 26-24-20" fill="none" stroke="#5eb27a" strokeWidth="1" />
      <path d="M1220 422l22 14 6 16 20 20M1279 482l1 32M1766 100l2 16 14 26" fill="none" stroke="#a9c7fb" strokeWidth="2" />
      <path d={river} fill="none" stroke="#fff" strokeWidth="9" />
      <path d={river} fill="none" stroke="#93b9fb" strokeWidth="6" />
      <g fill="none" stroke="#fff" strokeLinejoin="round">
        {arterials.map(([d, width]) => <path key={d} d={d} strokeWidth={width} />)}
      </g>
      <path d={ring} fill="none" stroke="#fff" strokeWidth="12" />
      <path d={ring} fill="none" stroke="#fddd86" strokeWidth="8.5" strokeLinejoin="round" />
      <path d="M1180 380C1200 384 1195 360 1204 350M1180 380C1200 378 1192 400 1197 412M1240 378C1220 378 1222 362 1217 350M1240 378C1215 380 1210 400 1208 412" fill="none" stroke="#fff" strokeWidth="4" />
      <path d={highway} fill="none" stroke="#fff" strokeWidth="16" />
      <path d={highway} fill="none" stroke="#f9b016" strokeWidth="13" />
      <path d={highway} fill="none" stroke="#fddf8c" strokeWidth="9.5" />
      <path d={highway} fill="none" stroke="#f6b93a" strokeWidth="1" />
      <rect x="1205" y="216" width="28" height="12" fill="#fbdb3a" stroke="#e3b90f" strokeWidth=".8" />
      <text x="1219" y="226" textAnchor="middle" className="fill-[#4a3d00] text-[10px]">CT20</text>
      {stops.map((s) => <BusStop key={`${s[0]}-${s[1]}`} at={s} />)}
      {pins.map((p) => <MapPin key={`${p[0]}-${p[1]}`} at={p} />)}
      <g stroke="#f6f7f8" strokeWidth="2" strokeLinejoin="round" paintOrder="stroke">
        {labels.map((l) => (
          <text
            key={`${l.x}-${l.y}`}
            x={l.x}
            y={l.y}
            textAnchor={l.anchor ?? "start"}
            className={tones[l.tone]}
            transform={l.turn ? `rotate(${l.turn} ${l.x} ${l.y})` : undefined}
          >
            {l.lines.map((line, i) => <tspan key={line} x={l.x} dy={i ? 14 : 0}>{line}</tspan>)}
          </text>
        ))}
        <text x="1755" y="583" className="fill-[#8ab4f8] text-[14px]">Moby dick điện máy</text>
        <path id="khanh-toan" d="M1591 323C1640 316 1660 332 1720 384" fill="none" stroke="none" />
        <text className={tones.road}><textPath href="#khanh-toan">Đ. Nguyễn Khánh Toàn</textPath></text>
      </g>
      <CarMarker />
    </svg>
  );
}

const logo: [string, string][] = [
  ["G", "text-[#4285f4]"], ["o", "text-[#ea4335]"], ["o", "text-[#f9ab00]"],
  ["g", "text-[#4285f4]"], ["l", "text-[#34a853]"], ["e", "text-[#ea4335]"],
];

function MapPanel() {
  const control = "absolute right-2.5 grid w-10 place-items-center rounded-xs bg-white text-[#666666] shadow";
  return (
    <div className="relative h-[500px] overflow-hidden font-['Roboto',sans-serif]">
      <StreetMap />
      <div className="absolute left-2.5 top-2.5 flex h-10 rounded-xs bg-white text-[18px] shadow">
        <button className="w-[69px] font-medium text-black">Map</button>
        <button className="w-[99px] border-l border-[#e8e8e8] text-[#565656]">Satellite</button>
      </div>
      <button aria-label="Full screen" className={`${control} top-2.5 h-10`}>
        <svg viewBox="0 0 18 18" className="size-[18px]" fill="none" stroke="currentColor" strokeWidth="2.6" aria-hidden="true">
          <path d="M1.300 6V1.300H6M12 1.300h4.700V6M16.700 12v4.700H12M6 16.700H1.300V12" />
        </svg>
      </button>
      <button aria-label="Street view" className={`${control} top-[323px] h-10`}>
        <svg viewBox="0 0 18 31" className="h-[31px] w-[18px]" fill="#fbb829" stroke="#c8902a" strokeWidth=".7" aria-hidden="true">
          <path d="M4 11h10l3.500 10-2.500 1-2-5-.5 13h-3L9 22l-.5 8h-3L5 17l-2 5-2.500-1z" />
          <path d="M6 11h6l-3 5z" fill="#e07a28" />
          <circle cx="9" cy="6" r="5.2" />
        </svg>
      </button>
      <div className={`${control} top-[395px] divide-y divide-[#e6e6e6]`}>
        <button aria-label="Zoom in" className="grid h-10 w-[30px] place-items-center">
          <svg viewBox="0 0 18 18" className="size-[18px]" fill="currentColor" aria-hidden="true"><path d="M7.200 0h3.600v7.200H18v3.600h-7.200V18H7.200v-7.200H0V7.200h7.200z" /></svg>
        </button>
        <button aria-label="Zoom out" className="grid h-[41px] w-[30px] place-items-center">
          <svg viewBox="0 0 18 18" className="size-[18px]" fill="currentColor" aria-hidden="true"><path d="M0 7.200h18v3.600H0z" /></svg>
        </button>
      </div>
      <div className="absolute bottom-0 left-2.5 font-['Open_Sans',sans-serif] text-[18px] leading-7">
        {logo.map(([letter, color], i) => <span key={i} className={color}>{letter}</span>)}
      </div>
      <div className="absolute bottom-0 right-0 flex h-3.5 items-center text-[10px] text-black">
        <button className="bg-[#f5f5f5]/70 px-1.5">Keyboard shortcuts</button>
        <span className="bg-[#f5f5f5]/70 px-1.5">Map data ©2023</span>
        <a href="#terms" className="bg-[#f5f5f5]/70 px-1.5">Terms</a>
        <a href="#report" className="bg-[#f5f5f5]/70 px-1.5">Report a map error</a>
      </div>
    </div>
  );
}

/* ------------------------------------------------------------------ */
/* Browser                                                             */
/* ------------------------------------------------------------------ */

function BrowserTabs() {
  return (
    <div className="flex h-10 shrink-0 items-end bg-[#2f2f2f] pl-2 pr-[18px] text-[12px] text-[#d6d6d6]">
      <button className="mb-0.5 flex h-7 w-[109px] items-center gap-1.5 rounded-full bg-[#0067c0] pl-0.5 font-semibold text-white">
        <svg viewBox="0 0 26 26" className="size-[25px]" aria-hidden="true">
          <circle cx="13" cy="13" r="13" fill="#222" />
          <circle cx="13" cy="9" r="5" fill="#8d8583" />
          <path d="M5 23c0-6 4-8 8-8s8 2 8 8a13 13 0 0 1-16 0z" fill="#aaa19e" />
        </svg>
        InPrivate (2)
      </button>
      <button aria-label="Tab actions" className="mb-2 text-white">
        <Line className="size-3.5" weight={1.6}>
          <rect x="1" y="1.5" width="14" height="13" rx="2.5" /><path d="M1 4h14M5.500 4v10" />
        </Line>
      </button>
      <div className="ml-4 flex h-8 w-[240px] items-center rounded-t-md bg-[#3b3b3b] pl-3">
        <Line className="size-4"><path d="M3 .8h6L13.500 5v10.200H3zM9 .8V5h4.500" /></Line>
        <span className="ml-2.5 flex-1">Car Tracking Map</span>
        <button aria-label="Close tab" className="mr-2"><X className="size-3.5" strokeWidth={1.5} /></button>
      </div>
      <button aria-label="New tab" className="mb-2 ml-2"><Plus className="size-[18px]" strokeWidth={1.2} /></button>
      <div className="mb-5 ml-auto flex gap-9 text-[#8f8f8f]">
        <button aria-label="Minimize"><Line className="size-2.5" box="0 0 10 10"><path d="M0 5h10" /></Line></button>
        <button aria-label="Maximize"><Line className="size-2.5" box="0 0 10 10"><rect x=".5" y=".5" width="9" height="9" rx="1" /></Line></button>
        <button aria-label="Close"><Line className="size-2.5" box="0 0 10 10"><path d="M.5.5l9 9M9.500.5l-9 9" /></Line></button>
      </div>
    </div>
  );
}

function Toolbar() {
  return (
    <div className="flex h-[38px] shrink-0 items-center pl-[19px] pr-3.5 text-[#e2e2e2]">
      <button aria-label="Back"><ArrowLeft className="size-5" strokeWidth={1.2} /></button>
      <button aria-label="Reload" className="ml-6"><RotateCw className="size-[18px]" strokeWidth={1.3} /></button>
      <div className="ml-[19px] flex h-[30px] min-w-0 flex-1 items-center rounded-full bg-[#2b2b2b] pl-[18px] pr-4">
        <Line className="size-4 shrink-0"><circle cx="8" cy="8" r="7.3" /><path d="M8 7v4.500M8 4.800v.1" /></Line>
        <a href="#localhost" className="ml-[15px] flex-1 text-[13px] text-white">localhost<span className="text-[#9a9a9a]">:8080</span></a>
        <button aria-label="Read aloud" className="mr-6 text-[#8f8f8f]">
          <Line><path d="M.8 13.500L5.300 3h.6l4.500 10.500M2.600 9.500h6M10 2a4 4 0 0 1 1.500 3.500M12.500.8A7 7 0 0 1 14.500 6" /></Line>
        </button>
        <button aria-label="Add to favorites" className="text-[#8f8f8f]"><Star className="size-[17px]" strokeWidth={1.3} /></button>
      </div>
      <div className="ml-5 flex items-center">
        <button aria-label="Droplet extension" className="grid size-4 place-items-center rounded-xs bg-[#1e9bf7]">
          <svg viewBox="0 0 16 16" className="size-3" fill="#fff" aria-hidden="true"><path d="M8 1.500c2.500 3.500 4 5.500 4 8a4 4 0 0 1-8 0c0-2.500 1.500-4.500 4-8z" /></svg>
        </button>
        <button aria-label="Content blocker" className="ml-7">
          <svg viewBox="0 0 16 16" className="size-4" aria-hidden="true">
            <path d="M8 .3C6 1.700 3.500 2 1 2v5c0 5 4 7.500 7 8.700C11 14.500 15 12 15 7V2C12.500 2 10 1.700 8 .3z" fill="#757575" />
            <path d="M4 5v3a1.300 1.300 0 0 0 3 0V5M8.800 5.300v3.800c4.500.4 4.500-4.200 0-3.800z" fill="none" stroke="#fff" strokeWidth="1.2" />
          </svg>
        </button>
        <button aria-label="Extensions" className="ml-7">
          <Line><path d="M5.500 3.200a2.300 2.300 0 0 1 4.500 0H13a1 1 0 0 1 1 1v2.500h-1a1.900 1.900 0 0 0 0 3.800h1V14a1 1 0 0 1-1 1h-3a2 2 0 0 0-4 0H3.500a1 1 0 0 1-1-1v-3a2.200 2.200 0 0 1 0-4.500V4.200a1 1 0 0 1 1-1z" /></Line>
        </button>
        <span className="mx-4 h-4 w-px bg-[#666666]" />
        <button aria-label="Split screen">
          <Line><path d="M6 2H2.500A1.500 1.500 0 0 0 1 3.500v9A1.500 1.500 0 0 0 2.500 14H6M10 2h3.500A1.500 1.500 0 0 1 15 3.500v9a1.500 1.500 0 0 1-1.500 1.500H10M8 .5v15" /></Line>
        </button>
        <button aria-label="Favorites" className="ml-7">
          <Line><path d="M9.500 5.500L6.500 1 4.600 5.500.6 6.200l3 3.200L2.800 14l3.700-2M10 6h5.500M9 9.500h6.500M9 13h6.500" /></Line>
        </button>
        <button aria-label="Browser essentials" className="relative ml-7">
          <Heart className="size-[17px]" strokeWidth={1.3} />
          <Line className="absolute inset-0 size-4"><path d="M1.500 8h3.500l1.500-3 2.500 5 1.500-2H14" /></Line>
          <span className="absolute -bottom-0.5 -right-0.5 size-2 rounded-full bg-[#107c10]" />
        </button>
        <button aria-label="Internet Explorer mode" className="ml-7">
          <svg viewBox="0 0 16 16" className="size-4" fill="none" aria-hidden="true">
            <path d="M4 14.500H2.500A1.500 1.500 0 0 1 1 13V2.500A1.500 1.500 0 0 1 2.500 1h11A1.500 1.500 0 0 1 15 2.500" stroke="#ddd" />
            <path d="M6.500 10h8c.3-6-8-6-8 0 0 4.500 6 5 7.600 1.600" stroke="#1eb4ee" strokeWidth="2.3" />
            <path d="M4.500 14.500C6 9 10 5 15.500 4" stroke="#1eb4ee" />
          </svg>
        </button>
        <button aria-label="More" className="ml-7">
          <svg viewBox="0 0 16 4" className="h-1 w-4" fill="currentColor" aria-hidden="true"><circle cx="2.5" cy="2" r="1.3" /><circle cx="8" cy="2" r="1.3" /><circle cx="13.5" cy="2" r="1.3" /></svg>
        </button>
      </div>
    </div>
  );
}

/* ------------------------------------------------------------------ */
/* Terminal                                                            */
/* ------------------------------------------------------------------ */

const records: [string, string, string][] = [
  ["88A-60587", "21.036316", "105.789444"],
  ["88A-60587", "21.036563", "105.782975"],
  ["88A-60589", "21.036316", "105.789444"],
  ["88A-60588", "21.036316", "105.88655"],
  ["88A-60588", "21.036316", "105.77655"],
  ["88A-99999", "21.03655", "105.782272"],
  ["88A-88888", "21.03655", "105.782272"],
];

function Terminal() {
  return (
    <section className="absolute bottom-[9px] left-[14px] right-[69px] flex h-[161px] flex-col overflow-hidden rounded-lg border border-[#9d9da3] bg-[#f0f0f0] shadow-2xl">
      <div className="flex h-[30px] shrink-0 items-center bg-[#f1f4fc] pl-2 pr-[18px] font-['Open_Sans',sans-serif] text-[12px] text-black">
        <svg viewBox="0 0 16 16" className="size-4" aria-hidden="true">
          <path d="M7 1h7.500v7H7zM1 8h7.500v5.500H1z" fill="#c9c9c9" stroke="#222" strokeWidth=".8" />
          <path d="M8.500 2.500H13v4H8.500zM2.500 9H7v3H2.500z" fill="#1b22c8" />
          <path d="M.8 13.500h9l-1 2H.8zM10 8h5.500l-1.500 2.500h-4z" fill="#9a9a9a" stroke="#222" strokeWidth=".6" />
          <path d="M12 3L7 7l1.500 1L4 12l6-4-1.500-1.200z" fill="#ffee22" />
        </svg>
        <h2 className="ml-1.5 flex-1">manhvud@manhvud: ~</h2>
        <div className="flex gap-9">
          <button aria-label="Minimize"><Line className="size-2.5" box="0 0 10 10"><path d="M0 5h10" /></Line></button>
          <button aria-label="Maximize"><Line className="size-2.5" box="0 0 10 10" weight={1.2}><rect x=".6" y=".6" width="8.8" height="8.8" rx="1" /></Line></button>
          <button aria-label="Close"><Line className="size-2.5" box="0 0 10 10" weight={1.2}><path d="M.3.3l9.400 9.400M9.700.3L.3 9.700" /></Line></button>
        </div>
      </div>
      <div className="flex min-h-0 flex-1">
        <div className="flex-1 whitespace-pre bg-black pt-0.5 font-['Liberation_Mono',monospace] text-[10pt] leading-4 text-[#bbbbbb]">
          {records.map(([id, lat, lon], i) => (
            <div key={i} className={i === 6 ? "mr-px bg-[#bbbbbb] text-black" : ""}>
              {`${id}       {"carId":"${id}","latitude":${lat},"longitude":${lon}}`}
            </div>
          ))}
          <div className="h-4 w-2 bg-[#00ff00]" />
        </div>
        <div className="flex w-[17px] items-end justify-center pb-4">
          <span className="h-[17px] w-0.5 bg-[#8a8a8a]" />
        </div>
      </div>
    </section>
  );
}

function Browser() {
  return (
    <div className="relative flex min-w-0 flex-col border-l-2 border-[#6a6a6a] bg-[#3b3b3b] font-['Open_Sans',sans-serif] shadow-[-6px_0_16px_rgba(0,0,0,0.25)]">
      <BrowserTabs />
      <Toolbar />
      <div className="ml-1 mr-[3px] flex-1 rounded-t-lg bg-white p-2">
        <MapPanel />
      </div>
      <Terminal />
    </div>
  );
}

export default function App() {
  return (
    <div className="relative grid h-screen min-h-[640px] grid-cols-[1067fr_849fr] overflow-hidden border-t-2 border-black bg-white">
      <Client />
      <Browser />
      <div className="pointer-events-none absolute inset-x-0 bottom-0 h-[280px] bg-linear-to-t from-black/22 to-transparent" />
    </div>
  );
}
